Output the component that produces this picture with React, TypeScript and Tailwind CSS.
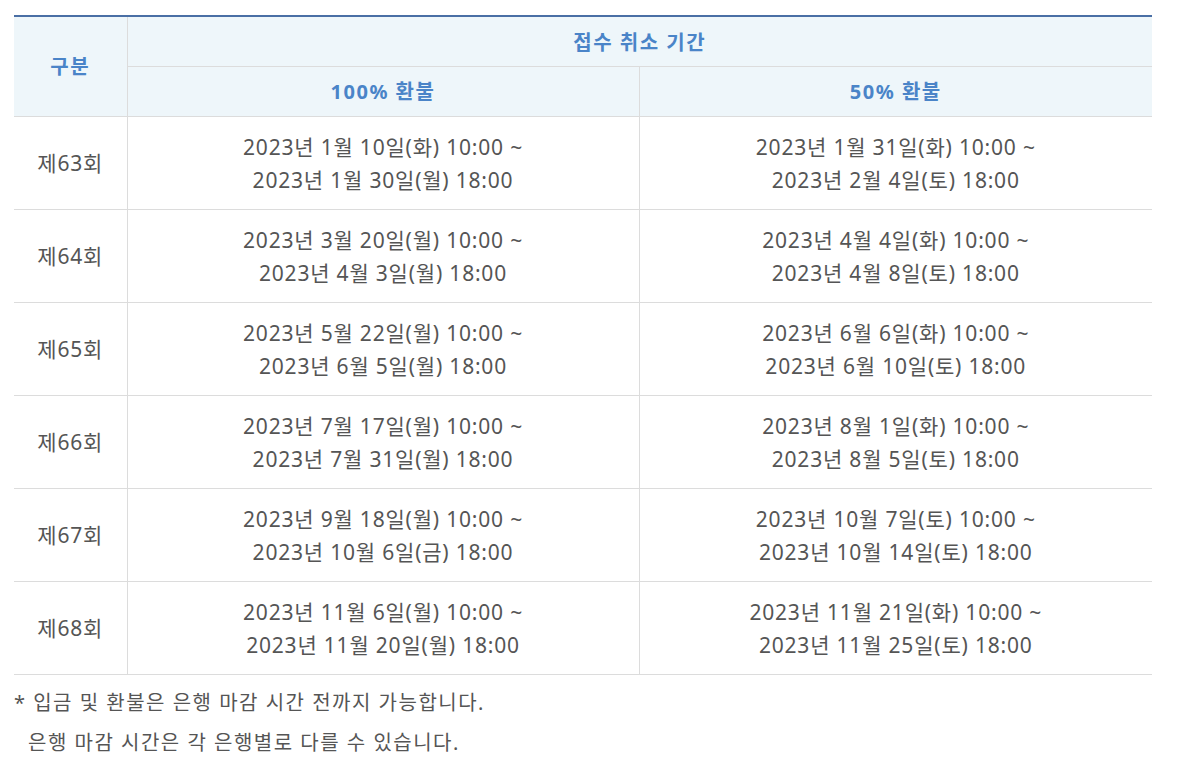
import React from 'react';

const rows = [
  { name: '제63회', full: ['2023년 1월 10일(화) 10:00 ~', '2023년 1월 30일(월) 18:00'], half: ['2023년 1월 31일(화) 10:00 ~', '2023년 2월 4일(토) 18:00'] },
  { name: '제64회', full: ['2023년 3월 20일(월) 10:00 ~', '2023년 4월 3일(월) 18:00'], half: ['2023년 4월 4일(화) 10:00 ~', '2023년 4월 8일(토) 18:00'] },
  { name: '제65회', full: ['2023년 5월 22일(월) 10:00 ~', '2023년 6월 5일(월) 18:00'], half: ['2023년 6월 6일(화) 10:00 ~', '2023년 6월 10일(토) 18:00'] },
  { name: '제66회', full: ['2023년 7월 17일(월) 10:00 ~', '2023년 7월 31일(월) 18:00'], half: ['2023년 8월 1일(화) 10:00 ~', '2023년 8월 5일(토) 18:00'] },
  { name: '제67회', full: ['2023년 9월 18일(월) 10:00 ~', '2023년 10월 6일(금) 18:00'], half: ['2023년 10월 7일(토) 10:00 ~', '2023년 10월 14일(토) 18:00'] },
  { name: '제68회', full: ['2023년 11월 6일(월) 10:00 ~', '2023년 11월 20일(월) 18:00'], half: ['2023년 11월 21일(화) 10:00 ~', '2023년 11월 25일(토) 18:00'] },
];

export default function App() {
  return (
    <div
      className="bg-white px-[14px] pt-[15px] text-[#555]"
      style={{ fontFamily: '"Noto Sans", "Noto Sans CJK KR", sans-serif' }}
    >
      <table className="w-[1138px] table-fixed border-collapse border-t-2 border-[#4a6fa5] text-center">
        <colgroup>
          <col className="w-[113px]" />
          <col className="w-[512px]" />
          <col />
        </colgroup>
        <thead className="bg-[#eef6fa] text-[20px] font-bold tracking-[1.5px] text-[#4a84c8]">
          <tr className="h-[50px]">
            <th rowSpan={2} className="border-r border-b border-[#dcdcdc] pt-[2px] font-bold">구분</th>
            <th colSpan={2} className="border-b border-[#dcdcdc] pt-[3px] font-bold">접수 취소 기간</th>
          </tr>
          <tr className="h-[50px]">
            <th className="border-r border-b border-[#dcdcdc] pt-[2px] font-bold">100% 환불</th>
            <th className="border-b border-[#dcdcdc] pt-[2px] font-bold">50% 환불</th>
          </tr>
        </thead>
        <tbody className="text-[21px] leading-[33px] tracking-[0.8px]">
          {rows.map(r => (
            <tr key={r.name} className="h-[93px]">
              <td className="border-r border-b border-[#dcdcdc] pt-[2px]">{r.name}</td>
              <td className="border-r border-b border-[#dcdcdc] pt-[2px]">
                {r.full.map(l => <div key={l}>{l}</div>)}
              </td>
              <td className="border-b border-[#dcdcdc] pt-[2px]">
                {r.half.map(l => <div key={l}>{l}</div>)}
              </td>
            </tr>
          ))}
        </tbody>
      </table>
      <div className="mt-[8px] text-[20px] leading-[40px] tracking-[1.5px]">
        <p>* 입금 및 환불은 은행 마감 시간 전까지 가능합니다.</p>
        <p className="pl-[14px]">은행 마감 시간은 각 은행별로 다를 수 있습니다.</p>
      </div>
    </div>
  );
}
